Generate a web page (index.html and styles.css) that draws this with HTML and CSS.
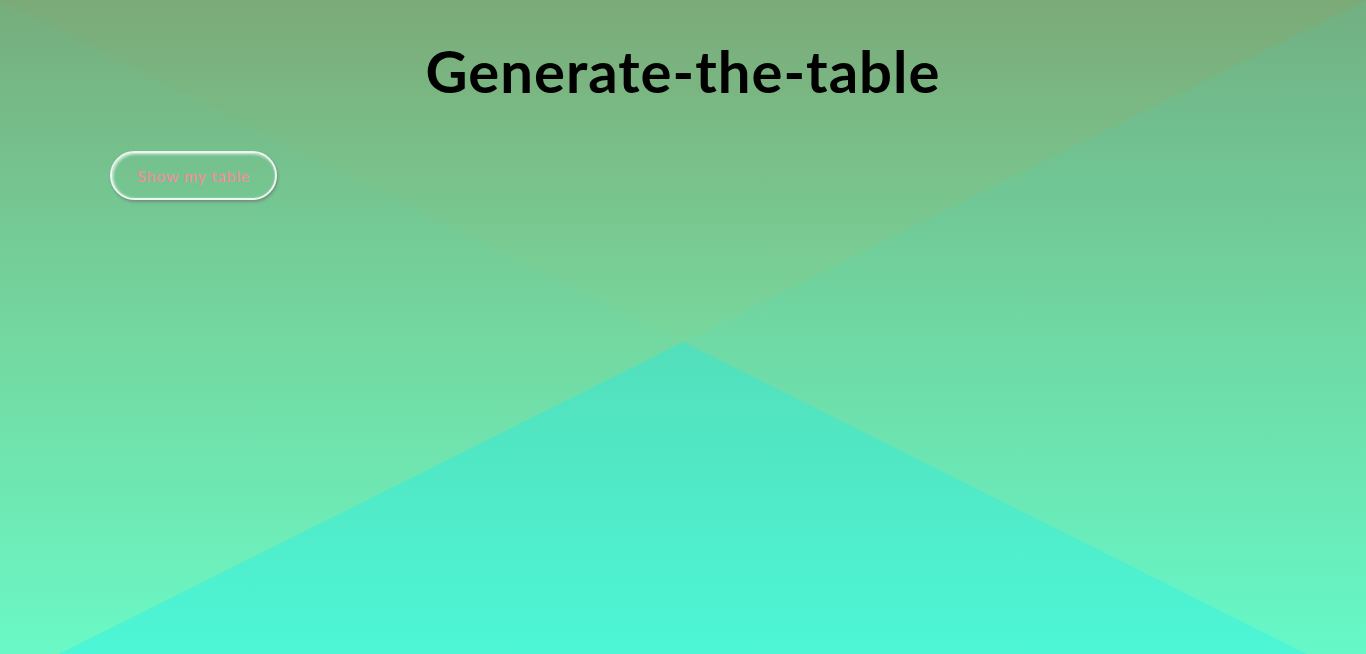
FILE: index.html
```html
<!DOCTYPE html>
<html lang="en">
<head>
<meta charset="utf-8">
<title>Generate-the-table</title>
<link rel="stylesheet" href="styles.css">
</head>
<body>
<main class="page">
  <h1 class="title">Generate-the-table</h1>
  <div class="actions">
    <button class="show-btn" type="button">Show my table</button>
  </div>
</main>
</body>
</html>
```

FILE: styles.css
```css
html, body {
  margin: 0;
  padding: 0;
  height: 100%;
  overflow: hidden;
}

.page {
  box-sizing: border-box;
  height: 100vh;
  padding: 38px 0 0;
  font-family: "Lato", "Liberation Sans", sans-serif;
  background-color: #72d2a0;
  background-image:
    conic-gradient(from 0deg at 50% 50%,
      rgba(0, 240, 255, 0) 0deg 63.43deg,
      rgba(0, 240, 255, 0.07) 63.43deg 116.57deg,
      rgba(0, 240, 255, 0.3) 116.57deg 243.43deg,
      rgba(0, 240, 255, 0.035) 243.43deg 296.57deg,
      rgba(0, 240, 255, 0) 296.57deg 360deg),
    linear-gradient(to bottom, #7baa78 0%, #78d59b 47%, #6dfcc8 100%);
  background-size: 100% 684px;
  background-repeat: no-repeat;
}

.title {
  margin: 0;
  text-align: center;
  font-size: 58px;
  font-weight: 700;
  letter-spacing: 1px;
  line-height: 66px;
  color: #000;
}

.actions {
  padding: 47px 0 0 110px;
}

.show-btn {
  box-sizing: border-box;
  width: 167px;
  height: 49px;
  border: 2px solid rgba(255, 255, 255, 0.85);
  border-radius: 25px;
  background: transparent;
  color: #f78a9c;
  font-family: "Lato", "Liberation Sans", sans-serif;
  font-size: 16px;
  letter-spacing: 0.8px;
  padding: 0;
  box-shadow: 1px 2px 3px rgba(110, 110, 110, 0.6), inset 1px 1px 3px rgba(255, 255, 255, 0.8);
  cursor: pointer;
}
```
